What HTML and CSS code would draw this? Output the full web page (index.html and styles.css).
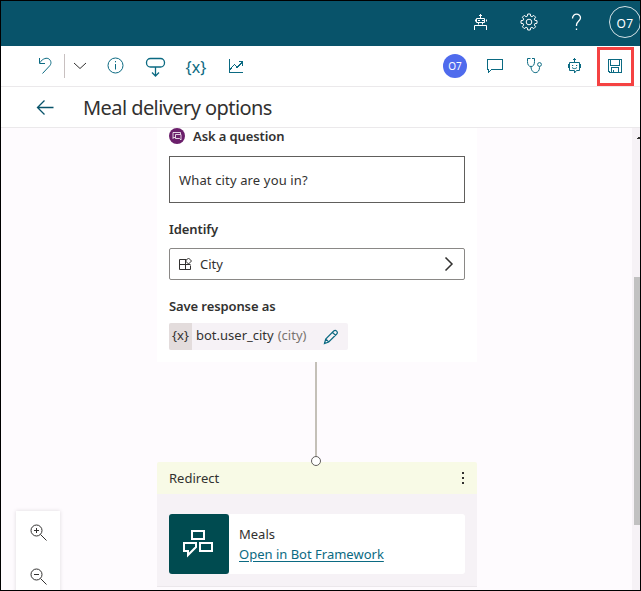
FILE: index.html
```html
<!DOCTYPE html>
<html lang="en">
<head>
<meta charset="utf-8">
<title>Meal delivery options</title>
<link rel="stylesheet" href="styles.css">
</head>
<body>
<div class="frame">
  <header class="topbar">
    <svg class="icon top-bot" viewBox="0 0 24 24"><path d="M7.500 8.500h8v4h-8zM11.500 8V4M10 5.500h3M9 10.500h2M13 10.500h2M6.500 9.500v2M17.500 9.500v2M5.500 20v-4.500h12V20M9.500 12.500v2M13.500 12.500v2"/></svg>
    <svg class="icon" viewBox="0 0 24 24"><circle cx="12" cy="12" r="2.800"/><path d="M10.700 4h2.600l.4 2.200 1.200.5 1.900-1.300 1.800 1.800-1.300 1.900.5 1.200 2.200.4v2.600l-2.200.4-.5 1.200 1.300 1.900-1.800 1.800-1.900-1.300-1.200.5-.4 2.200h-2.600l-.4-2.200-1.200-.5-1.900 1.300-1.800-1.800 1.300-1.900-.5-1.200L4 13.300v-2.600l2.200-.4.500-1.200-1.300-1.900 1.800-1.800 1.900 1.300 1.200-.5z"/></svg>
    <svg class="icon" viewBox="0 0 24 24"><path class="thick" d="M7.500 8.500C7.500 2.500 15.800 3.200 15.500 8c-.2 3.200-4 3.500-4 7v1M11.500 18.500V20"/></svg>
    <div class="account">O7</div>
  </header>
  <nav class="toolbar">
    <svg class="icon undo" viewBox="0 0 24 24"><path d="M6.500 4v5.500H12M6.500 9C10 4 14 3.500 16 5c2.500 2 2.500 5 .5 7L9.500 19.500"/></svg>
    <span class="divider"></span>
    <svg class="icon chevron" viewBox="0 0 24 24"><path d="M6 9l6 5.500L18 9"/></svg>
    <svg class="icon info" viewBox="0 0 24 24"><circle cx="12.500" cy="11.500" r="7.500"/><path d="M12.500 10v5.500M12.500 7v1.300"/></svg>
    <svg class="icon insert" viewBox="0 0 24 24"><rect class="thick" x="3.500" y="4.500" width="18" height="8.500" rx="4"/><path class="thick" d="M12.500 13v8.500M9 18.500l3.500 3.500 3.500-3.500"/></svg>
    <span class="variable">{x}</span>
    <svg class="icon chart crisp" viewBox="0 0 24 24"><path d="M5.500 5v13.500H19M6 15.500l4.500-5 2.500 3L18.500 8M14.500 7.500h4V12"/></svg>
    <span class="presence">O7</span>
    <svg class="icon comment crisp" viewBox="0 0 24 24"><path d="M4.500 5.500h15v10h-11l-3 3v-3h-1z"/></svg>
    <svg class="icon steth" viewBox="0 0 24 24"><path d="M7.500 4.500h-3v3c0 3 1 5 3.500 5s3.500-2 3.500-5v-3H9M8 12.500c0 8 8.500 8 8.500 1v-1"/><circle cx="16.500" cy="10.500" r="1.900"/></svg>
    <svg class="icon bot" viewBox="0 0 24 24"><path d="M6.500 8.500h10v8h-3l-2 2.500v-2.500h-5zM11.500 8V4M10 5.500h3M5.500 10v4M17.500 10v4M9 11.500h1.200M13 11.500h1.200M9 13.500c1.500 1.500 3.500 1.500 5 0"/></svg>
    <span class="save"><svg class="icon crisp" viewBox="0 0 24 24"><path d="M5.500 5.500h13v13H7l-1.500-1.500zM7.500 5.500V11h9V5.500M8.500 18v-4.500h7V18M10.500 18v-2.500"/></svg></span>
  </nav>
  <div class="titlebar">
    <svg class="icon" viewBox="0 0 24 24"><path class="thick" d="M4.500 12.500h16M11.500 5.500l-7 7 7 7"/></svg>
    <h1>Meal delivery options</h1>
  </div>
  <main class="canvas">
    <div class="flow">
      <section class="question">
        <div class="heading">
          <svg class="ask" viewBox="0 0 16 16"><circle cx="8" cy="8" r="8"/><path d="M6 9.500H4.500L4 10.500v-6h7.500V6M6.500 6.500H12v5.500l-1.500-1.500h-4z"/></svg>
          <h2>Ask a question</h2>
        </div>
        <div class="prompt">What city are you in?</div>
        <h2 class="identify">Identify</h2>
        <div class="select">
          <svg class="entity" viewBox="0 0 14 14"><path d="M7.500 2.500h-7v10h11v-4M.5 7.500h11M6.500 2.500v10M9.500 1L12.500 4 9.500 7 6.500 4z"/></svg>
          <span>City</span>
          <svg class="next" viewBox="0 0 10 14"><path d="M1.500 .5l6.500 6.500-6.500 6.500"/></svg>
        </div>
        <h2 class="saveas">Save response as</h2>
        <div class="chip">
          <span class="token">{x}</span>
          <span class="name">bot.user_city</span>
          <span class="type">(city)</span>
          <svg class="pencil" viewBox="0 0 16 16"><path d="M1.500 14.500l1.200-4.500 8-8c2-1.800 4.800 1 3 3l-8 8zM9.500 3.300l3.200 3.200M2.700 10l3.200 3.200"/></svg>
        </div>
      </section>
      <div class="connector"><i></i><b></b></div>
      <section class="redirect">
        <div class="redirect-head"><span>Redirect</span><span class="dots"><i></i><i></i><i></i></span></div>
        <div class="redirect-body">
          <div class="tile"><svg viewBox="0 0 60 60"><path d="M23 17h12v8H23zM31 29h12v8H31zM15 29h12v4l-8 8v-4h-4z"/></svg></div>
          <div class="details"><span class="meals">Meals</span><a>Open in Bot Framework</a></div>
        </div>
      </section>
    </div>
    <div class="zoom">
      <svg viewBox="0 0 18 18"><circle cx="6.500" cy="6.500" r="5.500"/><path d="M10.500 10.500l6 6M4 6.500h5M6.500 4v5"/></svg>
      <svg viewBox="0 0 18 18"><circle cx="6.500" cy="6.500" r="5.500"/><path d="M10.500 10.500l6 6M4 6.500h5"/></svg>
    </div>
    <div class="scroll"><span class="arrow"></span><span class="thumb"></span></div>
  </main>
</div>
</body>
</html>
```
FILE: styles.css
```css
* { box-sizing: border-box; }
body { margin: 0; font-family: "Noto Sans", "Open Sans", sans-serif; font-size: 13px; color: #323130; }
h1, h2 { margin: 0; }
svg { display: block; flex: none; fill: none; stroke: currentColor; stroke-width: 1; }
.frame { width: 641px; height: 591px; border: 1px solid #000; overflow: hidden; display: flex; flex-direction: column; background: #fff; }
.icon { width: 24px; height: 24px; }
.thick { stroke-width: 1.3; }
.crisp { shape-rendering: crispEdges; }

.topbar { flex: none; height: 45px; background: #08536a; color: #fff; display: flex; align-items: flex-start; padding-top: 9px; overflow: hidden; }
.topbar .icon { margin-right: 24px; }
.topbar .top-bot { margin-left: 468px; }
.account { flex: none; width: 32px; height: 32px; margin: -4px 0 0 -4px; border: 1px solid #d5e2e6; border-radius: 50%; font-size: 12px; line-height: 33px; text-align: center; letter-spacing: .3px; }

.toolbar { flex: none; height: 41px; border-bottom: 1px solid #ebe9eb; display: flex; align-items: center; color: #0b6a82; }
.undo { margin-left: 32px; }
.divider { width: 1px; height: 24px; margin-left: 7px; background: #c8c0c0; }
.chevron { margin-left: 3px; color: #323130; }
.info { margin-left: 11px; }
.insert { margin-left: 16px; }
.variable { width: 24px; margin-left: 17px; text-align: center; font-size: 16px; line-height: 24px; letter-spacing: .2px; padding-top: 2px; }
.chart { margin-left: 16px; }
.presence { width: 24px; height: 24px; margin-left: auto; border-radius: 50%; background: #4f6bed; color: #fff; font-size: 10px; line-height: 24px; text-align: center; }
.comment, .steth, .bot { margin-left: 16px; }
.save { display: flex; align-items: center; justify-content: flex-start; width: 37px; height: 39px; margin: 0 6px 0 10px; padding-left: 3px; border: 3px solid #f54242; }

.titlebar { flex: none; height: 41px; border-bottom: 1px solid #ebe9eb; display: flex; align-items: center; color: #08536a; }
.titlebar .icon { margin-left: 32px; }
h1 { margin-left: 26px; color: #323130; font-size: 20px; font-weight: 400; line-height: 41px; letter-spacing: -.57px; white-space: nowrap; }

.canvas { position: relative; flex: 1; min-height: 0; overflow: hidden; background: #fefbfe; }
.flow { width: 320px; margin-left: 156px; }
.question { height: 234px; padding: 0 12px; background: #fff; }
.heading { display: flex; gap: 8px; height: 16px; }
h2 { font-size: 13px; font-weight: 600; line-height: 16px; letter-spacing: -.1px; white-space: nowrap; }
.ask { width: 16px; height: 16px; color: #fff; stroke-width: .8; }
.ask circle { fill: #6b1f6b; stroke: none; }
.prompt { height: 47px; margin-top: 12px; padding-left: 9px; border: 1px solid #605e5c; line-height: 47px; letter-spacing: .14px; }
.identify { margin-top: 18px; }
.select { display: flex; align-items: center; height: 32px; margin-top: 11px; padding: 0 10px 0 9px; border: 1px solid #8a8886; border-radius: 2px; }
.entity { width: 14px; height: 14px; margin-right: 7px; }
.next { width: 10px; height: 14px; margin-left: auto; stroke-width: 1.5; }
.saveas { margin-top: 18px; }
.chip { display: flex; align-items: center; width: 179px; height: 27px; margin-top: 9px; border-radius: 2px; background: #f6f2f6; overflow: hidden; line-height: 25px; }
.token { width: 23px; height: 27px; background: #e3dcdc; text-align: center; }
.name { height: 27px; margin-left: 4px; }
.type { height: 27px; margin-left: 4px; color: #797470; }
.pencil { width: 16px; height: 16px; margin: 0 9px 0 auto; color: #0b6a82; stroke-width: 1.2; }

.connector { display: flex; flex-direction: column; align-items: center; height: 100px; margin-right: 2px; }
.connector i { flex: none; width: 2px; height: 94px; background: #c4c0b8; }
.connector b { position: relative; z-index: 1; flex: none; width: 10px; height: 10px; border: 1px solid #605e5c; border-radius: 50%; background: #fff; }
.redirect-head { display: flex; align-items: center; justify-content: space-between; height: 32px; padding: 0 12px; border-radius: 2px 2px 0 0; background: #f8fae6; }
.dots { display: flex; flex-direction: column; gap: 3px; width: 3px; }
.dots i { width: 2px; height: 2px; background: #323130; }
.redirect-body { display: flex; height: 93px; padding: 20px 12px 12px; border-bottom: 1px solid #ebe7eb; background: #f6f2f6; }
.tile { width: 60px; height: 60px; border-radius: 3px; background: #004b50; color: #fff; }
.tile svg { stroke-width: 2; }
.details { flex: 1; height: 60px; padding: 10px 0 0 10px; border-radius: 0 3px 3px 0; background: #fff; display: flex; flex-direction: column; align-items: flex-start; line-height: 20px; }
.details a { color: #0b6a82; text-decoration: underline; text-underline-offset: 2px; white-space: nowrap; }

.zoom { position: absolute; left: 15px; top: 383px; width: 44px; height: 90px; padding: 13px 14px; display: flex; flex-direction: column; gap: 26px; background: #fff; box-shadow: 0 0 4px #ded9de; }
.zoom svg { width: 18px; height: 18px; }
.scroll { position: absolute; right: 0; top: 0; width: 8px; height: 100%; padding-left: 2px; background: #f6f2f6; overflow: hidden; }
.arrow { display: block; height: 3px; margin: 8px 0 0 3px; background: linear-gradient(135deg, transparent 50%, #323130 50%); width: 3px; }
.thumb { display: block; height: 248px; margin-top: 138px; background: #c1c1c1; }
```
